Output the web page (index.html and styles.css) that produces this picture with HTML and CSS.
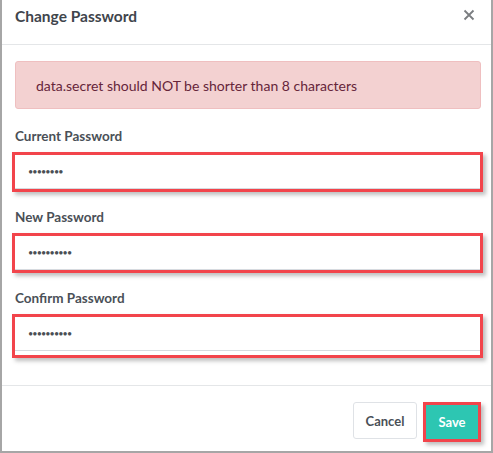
FILE: index.html
```html
<!DOCTYPE html>
<html>
<head>
<meta charset="utf-8">
<link rel="stylesheet" href="styles.css">
</head>
<body>
<div class="modal">
  <div class="modal-header">
    <h2 class="title">Change Password</h2>
    <span class="close">
      <svg width="12" height="12" viewBox="0 0 12 12"><path d="M1.5 1.5L10.5 10.5M10.5 1.5L1.5 10.5" stroke="#7a7d80" stroke-width="1.8" fill="none"/></svg>
    </span>
  </div>
  <div class="modal-body">
    <div class="alert">data.secret should NOT be shorter than 8 characters</div>
    <div class="field">
      <label class="label">Current Password</label>
      <div class="hl"><div class="input">••••••••</div></div>
    </div>
    <div class="field">
      <label class="label">New Password</label>
      <div class="hl"><div class="input">••••••••••</div></div>
    </div>
    <div class="field">
      <label class="label">Confirm Password</label>
      <div class="hl hl-tall"><div class="input">••••••••••</div></div>
    </div>
  </div>
  <div class="modal-footer">
    <button class="btn btn-cancel">Cancel</button>
    <div class="hl-btn"><button class="btn btn-save">Save</button></div>
  </div>
</div>
</body>
</html>
```
FILE: styles.css
```css
* { box-sizing: border-box; }
html, body { margin: 0; padding: 0; background: #fff; }
body { font-family: "Lato", "Open Sans", sans-serif; color: #454b52; }
.modal {
  width: 493px;
  height: 453px;
  border-left: 2px solid #a6a6a6;
  border-right: 2px solid #a6a6a6;
  border-bottom: 2px solid #a6a6a6;
  display: flex;
  flex-direction: column;
  background: #fff;
}
.modal-header {
  flex: 0 0 45px;
  border-bottom: 1px solid #e4e6e8;
  display: flex;
  align-items: center;
  justify-content: space-between;
  padding: 0 16px 0 13px;
}
.title {
  margin: 0;
  font-size: 15.5px;
  font-weight: 700;
  color: #3f454c;
  position: relative;
  top: -6px;
}
.close { display: flex; position: relative; top: -7px; }
.modal-body {
  padding: 16px 10px 0 13px;
  flex: 1 1 auto;
  min-height: 0;
}
.alert {
  height: 48px;
  background: #f3d1d1;
  border: 1px solid #efbfc0;
  border-radius: 3px;
  color: #66253a;
  font-size: 14px;
  display: flex;
  align-items: center;
  padding-left: 20px;
  margin-bottom: 19px;
}
.field { margin-bottom: 17px; }
.label {
  display: block;
  font-size: 13.5px;
  line-height: 16px;
  font-weight: 700;
  color: #4a5057;
  margin-bottom: 8px;
}
.hl {
  border: 3px solid #f2444b;
  box-shadow: 3px 3px 4px rgba(0,0,0,0.25);
  width: 471px;
  margin-left: -3px;
}
.hl-tall { padding-bottom: 4px; }
.input {
  height: 34px;
  border-bottom: 1px solid #d6dadf;
  display: flex;
  align-items: center;
  padding-left: 13px;
  font-size: 9px;
  letter-spacing: -0.9px;
  color: #4a4f55;
}
.modal-footer {
  flex: 0 0 66px;
  border-top: 1px solid #e4e6e8;
  display: flex;
  justify-content: flex-end;
  align-items: flex-start;
  padding: 16px 10px 0 0;
  gap: 6px;
}
.btn {
  font-family: inherit;
  font-weight: 700;
  font-size: 13px;
  border-radius: 3px;
  cursor: pointer;
}
.btn-cancel {
  width: 64px;
  height: 37px;
  background: #fff;
  border: 1px solid #dfe2e6;
  color: #4a5057;
}
.hl-btn {
  border: 3px solid #f2444b;
  box-shadow: 3px 3px 4px rgba(0,0,0,0.25);
}
.btn-save {
  display: block;
  width: 52px;
  height: 34px;
  background: #2dc6b2;
  border: none;
  border-radius: 0;
  color: #fff;
}
```
